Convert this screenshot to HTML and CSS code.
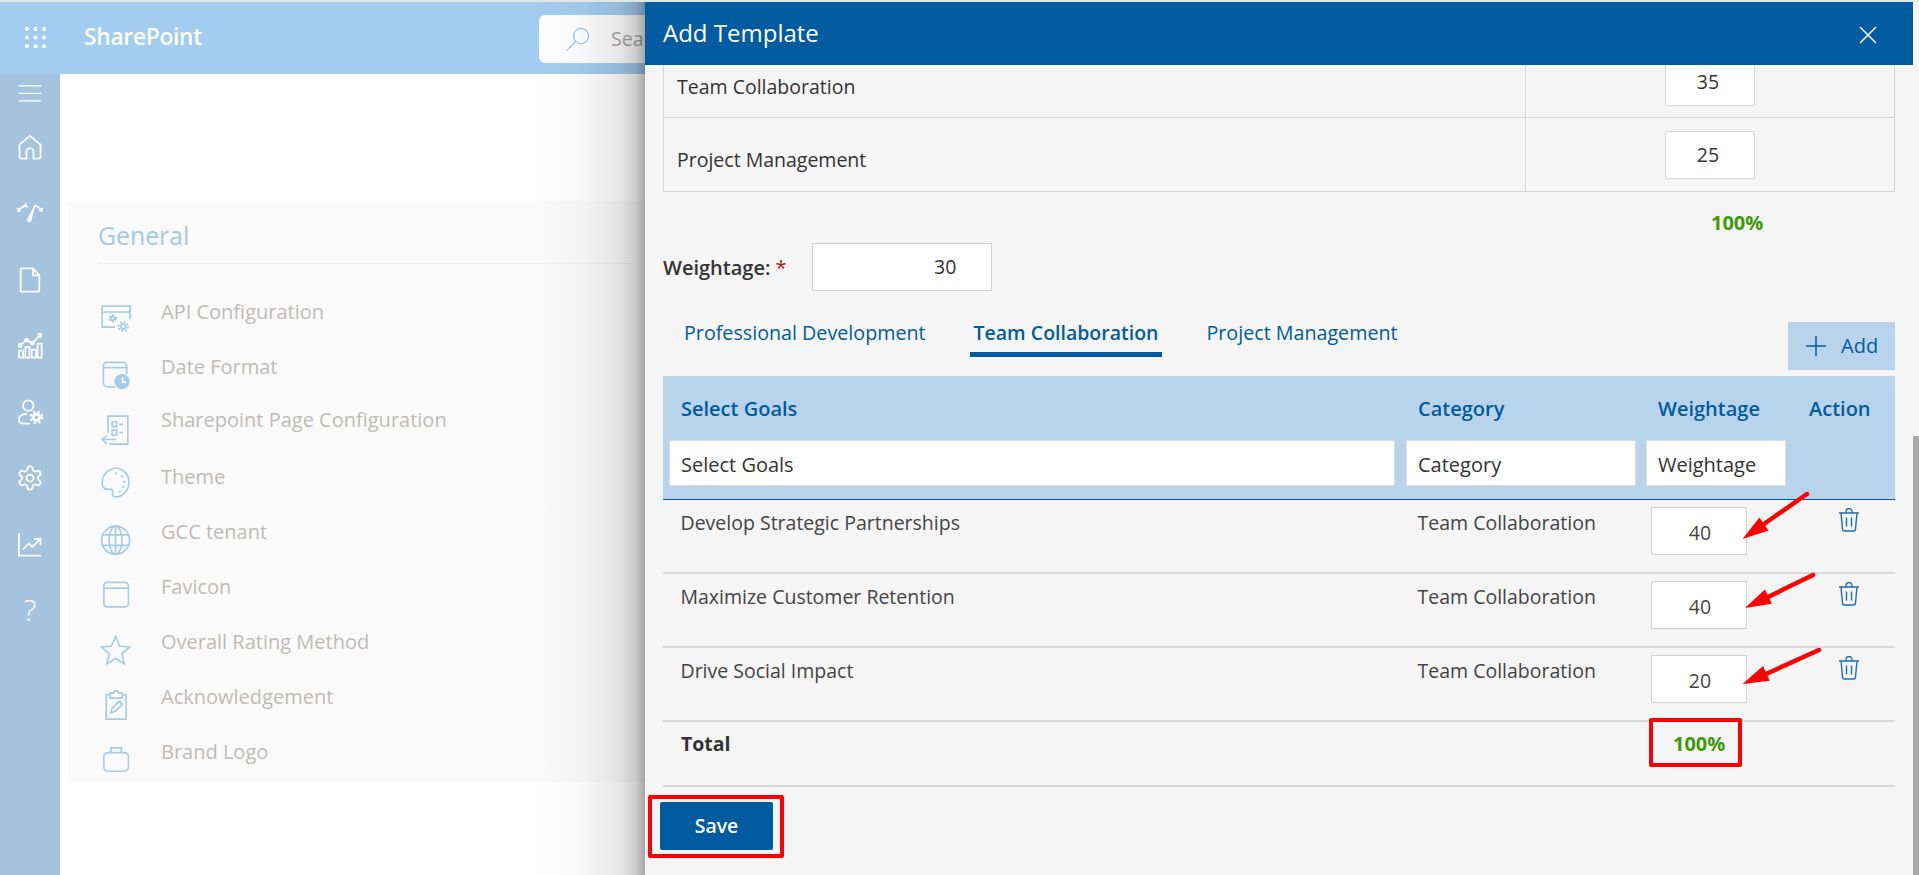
FILE: index.html
```html
<!doctype html>
<html lang="en-US">
<head>
  <meta name="viewport" content="width=device-width, initial-scale=1" charset="utf-8">
  <title>Add Template</title>
  <link rel="stylesheet" href="styles.css">
</head>
<body>
  <header class="topbar">
    <svg class="waffle" viewBox="0 0 24 24" fill="#fff">
      <circle cx="3" cy="3" r="2.1"/><circle cx="12" cy="3" r="2.1"/><circle cx="21" cy="3" r="2.1"/>
      <circle cx="3" cy="12" r="2.1"/><circle cx="12" cy="12" r="2.1"/><circle cx="21" cy="12" r="2.1"/>
      <circle cx="3" cy="21" r="2.1"/><circle cx="12" cy="21" r="2.1"/><circle cx="21" cy="21" r="2.1"/>
    </svg>
    <div class="brand">SharePoint</div>
    <div class="search">
      <svg class="search-icon" viewBox="0 0 24 24"><circle cx="15" cy="9" r="7.6"/><path d="M9.5 14.5 1 23.5"/></svg>
      <span>Sea</span>
    </div>
  </header>

  <div class="layout">
    <nav class="sidebar">
      <div class="nav-item nav-menu"><svg viewBox="0 0 24 24"><path d="M2.500 1.500h19M2.500 8h19M2.500 14.500h19"/></svg></div>
      <div class="nav-item nav-home"><svg viewBox="0 0 24 24"><path d="M12 2.500 3 10v10a2 2 0 0 0 2 2h4v-6a3 3 0 0 1 6 0v6h4a2 2 0 0 0 2-2V10z"/></svg></div>
      <div class="nav-item"><svg viewBox="0 3 24 24"><path d="M1.500 13c2-2.800 4.200-4.500 6.500-5.200M16.500 7.800c2.500.8 4.500 2.500 6 5.200M8 5.800l1.500 3.700M1 10l3 2.500M23 10l-3 2.500"/><path class="solid" d="M17 5.500 9.500 19.500a2 2 0 0 0 3.500 1.800z"/></svg></div>
      <div class="nav-item"><svg viewBox="0 0 24 24"><path d="M4.500 2h10l5.500 6v12.500a1.500 1.500 0 0 1-1.500 1.500h-13A1.500 1.500 0 0 1 4 20.500v-17A1.500 1.500 0 0 1 5.500 2zM14.500 2v6H20"/></svg></div>
      <div class="nav-item"><svg viewBox="0 0 24 24"><path d="M2.500 16h3.500v6H2.500zM8 13h3.500v9H8zM13.500 15H17v7h-3.500zM18.500 10H22v12h-3.500zM3.500 11.500l5.500-4.500 5 2.500 6-6"/><circle cx="3.500" cy="11.500" r="1.300"/><circle cx="9" cy="7" r="1.300"/><circle cx="14" cy="9.500" r="1.300"/><circle cx="20.500" cy="3" r="1.300"/></svg></div>
      <div class="nav-item"><svg viewBox="0 0 24 24"><circle cx="10.500" cy="6.500" r="4.500"/><path d="M9.500 13.500C5 13.500 2.500 15.500 2.500 18.500s2.500 3.500 5 3.500h4.500"/><circle class="solid" cx="17.500" cy="16.500" r="4"/><circle class="gear-teeth" cx="17.500" cy="16.500" r="5"/><circle class="gear-hole" cx="17.500" cy="16.500" r="1.500"/></svg></div>
      <div class="nav-item"><svg viewBox="0 0 24 24"><path d="M12.220 2h-.44a2 2 0 0 0-2 2v.18a2 2 0 0 1-1 1.730l-.43.25a2 2 0 0 1-2 0l-.15-.08a2 2 0 0 0-2.730.73l-.22.38a2 2 0 0 0 .73 2.730l.15.1a2 2 0 0 1 1 1.720v.51a2 2 0 0 1-1 1.740l-.15.09a2 2 0 0 0-.73 2.730l.22.38a2 2 0 0 0 2.730.73l.15-.08a2 2 0 0 1 2 0l.43.25a2 2 0 0 1 1 1.730V20a2 2 0 0 0 2 2h.44a2 2 0 0 0 2-2v-.18a2 2 0 0 1 1-1.730l.43-.25a2 2 0 0 1 2 0l.15.08a2 2 0 0 0 2.730-.73l.22-.39a2 2 0 0 0-.73-2.730l-.15-.08a2 2 0 0 1-1-1.740v-.5a2 2 0 0 1 1-1.740l.15-.09a2 2 0 0 0 .73-2.730l-.22-.38a2 2 0 0 0-2.730-.73l-.15.08a2 2 0 0 1-2 0l-.43-.25a2 2 0 0 1-1-1.730V4a2 2 0 0 0-2-2z"/><circle cx="12" cy="12" r="3"/></svg></div>
      <div class="nav-item"><svg viewBox="0 0 24 24"><path d="M2.500 2.500v19.500h19M6 16.500l5-5 3 3 7-7M15.500 7.500H21V13"/></svg></div>
      <div class="nav-item nav-help">?</div>
    </nav>

    <main class="content">
      <section class="card">
        <h2>General</h2>
        <ul class="settings">
          <li><svg viewBox="0 0 24 24"><path d="M12 19H1V1h24v11M1 6h24"/><circle cx="10" cy="11.500" r="1.500"/><circle class="teeth" cx="10" cy="11.500" r="2.800"/><circle cx="19" cy="18.500" r="2.200"/><circle class="teeth" cx="19" cy="18.500" r="4"/></svg>API Configuration</li>
          <li><svg viewBox="0 0 24 24"><path d="M12 23H6a4 4 0 0 1-4-4V5a3 3 0 0 1 3-3h14a3 3 0 0 1 3 3v7M2 6.500h20"/><circle class="fill" cx="18" cy="18.500" r="6.500"/><path class="hands" d="M18.500 15v4h3"/></svg>Date Format</li>
          <li class="settings-page"><svg viewBox="0 0 24 24"><path d="M6 15V1h17v24H7M9.500 6h4v4h-4zM9.500 13h4v4h-4zM15.500 8H19M15.500 15H19M13 21H1.500M5 17.500l-4 3.500 4 3.500"/></svg><span>Sharepoint Page Configuration</span></li>
          <li><svg viewBox="0 2.500 24 24"><path d="M13 25.500c-2.500 0-3.500-1.500-3-3.500.5-2.500-1-3.500-3-3-3 .5-5.500-1-6-4C.5 7 6 1 13 1c6 0 11 5.500 11 12s-5 12.500-11 12.500z"/><circle class="fill" cx="13" cy="5.500" r="1"/><circle class="fill" cx="18" cy="8" r="1"/><circle class="fill" cx="20" cy="12.500" r="1"/><circle class="fill" cx="19" cy="17" r="1"/><circle class="fill" cx="16" cy="21" r="1"/></svg>Theme</li>
          <li><svg viewBox="0 0 24 24"><circle cx="12.500" cy="13" r="12"/><ellipse cx="12.500" cy="13" rx="5.500" ry="12"/><path d="M12.500 1v24M1.500 8.500h22M1.500 17.500h22"/></svg>GCC tenant</li>
          <li><svg viewBox="0 0 24 24"><rect x="2.500" y="2" width="21" height="21" rx="3"/><path d="M2.500 7h21"/></svg>Favicon</li>
          <li><svg viewBox="0 0 24 24"><path d="M12.500 1.500l3.500 8 8.500.8-6.500 5.700 2 8.700-7.500-4.600-7.500 4.600 2-8.700L.5 10.300l8.500-.8z"/></svg>Overall Rating Method</li>
          <li><svg viewBox="0 0 24 24"><path d="M8 4H4.500v21h17V4H18M8 2.500h3a2 2 0 0 1 4 0h3V7H8zM8.500 19.500l1-4 6-6 2.800 2.800-6 6z"/></svg>Acknowledgement</li>
          <li><svg viewBox="0 0 24 24"><rect x="2.500" y="6.500" width="21" height="16" rx="3.500"/><path d="M8.500 6.500V2.500h9v4"/></svg>Brand Logo</li>
        </ul>
      </section>
    </main>
  </div>

  <aside class="panel">
    <div class="panel-head">
      <h1>Add Template</h1>
      <svg class="close" viewBox="0 0 18 18"><path d="M1 1l16 16M17 1 1 17"/></svg>
    </div>
    <div class="panel-body">
      <div class="category-table">
        <div class="category-row">
          <div class="category-name">Team Collaboration</div>
          <div class="category-value"><div class="value-box">35</div></div>
        </div>
        <div class="category-row">
          <div class="category-name">Project Management</div>
          <div class="category-value"><div class="value-box">25</div></div>
        </div>
      </div>
      <div class="category-total">100%</div>

      <div class="weight-row">
        <label>Weightage: <span class="req">*</span></label>
        <div class="weight-box">30</div>
      </div>

      <div class="tabs-row">
        <div class="tabs">
          <a>Professional Development</a>
          <a class="active">Team Collaboration</a>
          <a>Project Management</a>
        </div>
        <button class="add-btn"><svg viewBox="0 0 20 20"><path d="M10 0v20M0 10h20"/></svg>Add</button>
      </div>

      <div class="goals">
        <div class="goals-head">
          <div class="cell-goal"><strong>Select Goals</strong><div class="filter">Select Goals</div></div>
          <div class="cell-cat"><strong>Category</strong><div class="filter">Category</div></div>
          <div class="cell-weight"><strong>Weightage</strong><div class="filter">Weightage</div></div>
          <div class="cell-action"><strong>Action</strong></div>
        </div>

        <div class="goal-row">
          <div class="goal-name">Develop Strategic Partnerships</div>
          <div class="goal-cat">Team Collaboration</div>
          <div class="goal-weight"><div class="goal-box">40</div></div>
          <div class="goal-action"><svg viewBox="0 0 22 24"><path d="M1 5h20M8 5V3.500a2.500 2.500 0 0 1 6 0V5M3 5l1.500 16a2 2 0 0 0 2 2h9a2 2 0 0 0 2-2L19 5M8.500 9.500v9M13.500 9.500v9"/></svg></div>
        </div>
        <div class="goal-row">
          <div class="goal-name">Maximize Customer Retention</div>
          <div class="goal-cat">Team Collaboration</div>
          <div class="goal-weight"><div class="goal-box">40</div></div>
          <div class="goal-action"><svg viewBox="0 0 22 24"><path d="M1 5h20M8 5V3.500a2.500 2.500 0 0 1 6 0V5M3 5l1.500 16a2 2 0 0 0 2 2h9a2 2 0 0 0 2-2L19 5M8.500 9.500v9M13.500 9.500v9"/></svg></div>
        </div>
        <div class="goal-row">
          <div class="goal-name">Drive Social Impact</div>
          <div class="goal-cat">Team Collaboration</div>
          <div class="goal-weight"><div class="goal-box">20</div></div>
          <div class="goal-action"><svg viewBox="0 0 22 24"><path d="M1 5h20M8 5V3.500a2.500 2.500 0 0 1 6 0V5M3 5l1.500 16a2 2 0 0 0 2 2h9a2 2 0 0 0 2-2L19 5M8.500 9.500v9M13.500 9.500v9"/></svg></div>
        </div>
        <div class="goal-row total-row">
          <div class="goal-name">Total</div>
          <div></div>
          <div class="goal-total">100%</div>
          <div></div>
        </div>
      </div>

      <button class="save-btn">Save</button>
    </div>
    <div class="scroll-thumb"></div>
  </aside>

  <!-- red markup drawn on top of the screenshot -->
  <div class="mark mark-total"></div>
  <div class="mark mark-save"></div>
  <svg class="arrows" viewBox="0 0 1919 875">
    <line x1="1807" y1="494" x2="1764" y2="524"/>
    <polygon points="1742.500,539 1759.400,517.400 1768.600,530.600"/>
    <line x1="1813" y1="575" x2="1768" y2="597"/>
    <polygon points="1745,608 1764.900,589.400 1771.900,603.800"/>
    <line x1="1819" y1="650" x2="1766" y2="674"/>
    <polygon points="1742.500,684 1763.100,666.100 1769.700,680.700"/>
  </svg>
</body>
</html>
```

FILE: styles.css
```css
* {
  box-sizing: border-box;
}

html,
body {
  height: 100%;
}

body {
  margin: 0;
  overflow: hidden;
  background: #fff;
  color: #333;
  font-family: "Open Sans", "Noto Sans", Arial, sans-serif;
  font-size: 19.500px;
  line-height: 24px;
  border-top: 2px solid #dfe8e4;
}

/* top bar */
.topbar {
  height: 72px;
  background: #a3cdf0;
  display: flex;
  align-items: center;
  padding-left: 24px;
}

.waffle {
  width: 23px;
  height: 23px;
  margin-top: -2px;
}

.brand {
  margin-left: 37px;
  width: 118px;
  color: #fff;
  font-size: 22.800px;
  font-weight: 600;
  margin-top: -3px;
  letter-spacing: -0.3px;
  white-space: nowrap;
}

.search {
  margin-left: 337px;
  width: 106px;
  height: 48px;
  margin-top: 2px;
  background: #fff;
  border-radius: 6px 0 0 6px;
  display: flex;
  align-items: center;
  padding-left: 27px;
  color: #a9a9a9;
  flex: none;
}

.search-icon {
  width: 24px;
  height: 24px;
  flex: none;
  margin-right: 21px;
  fill: none;
  stroke: #a3cbe9;
  stroke-width: 1.400;
}

/* left side */
.layout {
  display: flex;
  height: calc(100% - 72px);
}

.sidebar {
  width: 60px;
  flex: none;
  background: #a5c3de;
  padding-top: 1px;
}

.nav-item {
  height: 66px;
  display: flex;
  align-items: center;
  justify-content: center;
}

.nav-menu {
  height: 40px;
  align-items: flex-start;
  padding-top: 9px;
}

.nav-home {
  padding-bottom: 2px;
}

.nav-item svg {
  width: 28px;
  height: 28px;
  fill: none;
  stroke: #fff;
  stroke-width: 1.500;
  overflow: visible;
}

.nav-menu svg {
  stroke-width: 1.100;
}

.nav-item .solid {
  fill: #fff;
  stroke: none;
}

.nav-item .gear-teeth {
  stroke-width: 1.800;
  stroke-dasharray: 2 2;
}

.nav-item .gear-hole {
  fill: #a5c3de;
  stroke: none;
}

.nav-help {
  color: #fff;
  font-size: 30px;
  font-weight: 300;
}

.content {
  flex: 1;
  padding: 127px 0 0 8px;
}

.card {
  height: 581px;
  background: #fafafa;
  padding: 17px 0 0 30px;
}

.card h2 {
  margin: 0;
  width: 532px;
  height: 46px;
  border-bottom: 1px solid #efefef;
  color: #a5c8e4;
  font-size: 24.800px;
  font-weight: 400;
  line-height: 34px;
}

.settings {
  list-style: none;
  margin: 36px 0 0;
  padding: 0;
  color: #bfbab8;
  font-size: 20px;
}

.settings li {
  height: 55px;
  display: flex;
  align-items: flex-start;
}

.settings li svg {
  width: 28px;
  height: 28px;
  flex: none;
  margin: 5px 32px 0 3px;
  fill: none;
  stroke: #a5cbe7;
  stroke-width: 1.400;
  overflow: visible;
}

.settings .settings-page span {
  margin-top: -2px;
}

.settings .teeth {
  stroke-width: 1.500;
  stroke-dasharray: 1.700 1.400;
}

.settings .fill {
  fill: #a5cbe7;
  stroke: none;
}

.settings .hands {
  stroke: #fafafa;
}

/* slide-out panel */
.panel {
  position: absolute;
  top: 2px;
  left: 645px;
  right: 0;
  bottom: 0;
  background: #f5f5f5;
  display: flex;
  flex-direction: column;
}

.panel::before {
  content: "";
  position: absolute;
  top: 0;
  bottom: 0;
  right: 100%;
  width: 110px;
  background: linear-gradient(to right, rgba(0, 0, 0, 0), rgba(0, 0, 0, 0.03) 45%, rgba(0, 0, 0, 0.09) 75%, rgba(0, 0, 0, 0.2) 92%, rgba(0, 0, 0, 0.34));
}

.panel-head {
  height: 63px;
  margin-right: 6px;
  flex: none;
  background: #015ba0;
  color: #fff;
  display: flex;
  align-items: center;
  justify-content: space-between;
  padding: 0 36px 0 18px;
  position: relative;
  z-index: 1;
}

.panel-head h1 {
  margin: -2px 0 0;
  font-size: 24px;
  font-weight: 400;
}

.close {
  width: 18px;
  height: 18px;
  fill: none;
  stroke: #fff;
  stroke-width: 1.500;
  margin-top: 3px;
}

.panel-body {
  flex: 1;
  overflow: hidden;
  padding: 0 24px 0 18px;
}

.category-table {
  margin-top: -20px;
  border: 1px solid #d5d5d5;
  border-top: 0;
}

.category-row {
  display: grid;
  grid-template-columns: 862px 1fr;
  height: 73px;
  border-bottom: 1px solid #d5d5d5;
}

.category-row:last-child {
  border-bottom: 0;
}

.category-name {
  padding: 30px 0 0 13px;
  border-right: 1px solid #d5d5d5;
}

.category-value {
  padding: 13px 0 0 139px;
}

.value-box {
  width: 90px;
  height: 48px;
  background: #fff;
  border: 1px solid #d8d8d8;
  border-radius: 2px;
  text-align: center;
  padding-right: 4px;
  line-height: 46px;
}

.category-total {
  margin-top: 19px;
  margin-bottom: -1px;
  padding-left: 1048px;
  color: #3f9a0b;
  font-size: 20px;
  font-weight: 700;
}

.weight-row {
  margin-top: 9px;
  height: 48px;
  display: flex;
  align-items: center;
}

.weight-row label {
  width: 149px;
  font-size: 20px;
  font-weight: 600;
  padding-top: 2px;
}

.req {
  color: #a4262c;
  font-weight: 400;
}

.weight-box {
  width: 180px;
  height: 48px;
  background: #fff;
  border: 1px solid #d2d2d2;
  padding-left: 121px;
  line-height: 46px;
}

.tabs-row {
  margin-top: 30px;
  display: flex;
  justify-content: space-between;
  align-items: flex-start;
}

.tabs {
  display: flex;
  gap: 40px;
  margin-left: 17px;
  font-size: 19.700px;
}

.tabs a {
  padding: 0 4px 7px;
  color: #015ba0;
  border-bottom: 5px solid transparent;
}

.tabs a.active {
  font-size: 19.500px;
  font-weight: 600;
  border-bottom-color: #015ba0;
}

.add-btn {
  margin-top: 1px;
  width: 107px;
  height: 48px;
  border: 0;
  background: #b8d4ec;
  color: #015ba0;
  font: inherit;
  font-size: 20px;
  display: flex;
  align-items: center;
  padding: 0 0 0 18px;
}

.add-btn svg {
  width: 20px;
  height: 20px;
  margin-right: 15px;
  fill: none;
  stroke: #015ba0;
  stroke-width: 1.500;
}

.goals {
  margin-top: 6px;
}

.goals-head,
.goal-row {
  display: grid;
  grid-template-columns: 737px 240px 152px 1fr;
}

.goals-head {
  height: 124px;
  background: #b8d4ec;
  border-bottom: 1px solid #015ba0;
  padding-top: 21px;
}

.goals-head strong {
  display: block;
  color: #015ba0;
  font-size: 20px;
  font-weight: 600;
  margin-bottom: 19px;
  padding-left: 18px;
}

.filter {
  height: 46px;
  background: #fff;
  border: 1px solid #ded9d6;
  font-size: 20px;
  line-height: 48px;
  padding-left: 11px;
  margin-left: 6px;
}

.cell-goal .filter {
  width: 726px;
}

.cell-cat .filter {
  width: 230px;
}

.cell-weight .filter {
  width: 140px;
}

.cell-action strong {
  padding-left: 17px;
}

.goal-row {
  height: 74px;
  border-bottom: 2px solid #dbd7d9;
  color: #444;
}

.goal-name,
.goal-cat {
  padding: 11px 0 0 17.500px;
}

.goal-weight {
  padding: 7px 0 0 11px;
}

.goal-box {
  width: 96px;
  height: 48px;
  background: #fff;
  border: 1px solid #d2d2d2;
  text-align: center;
  padding-left: 2px;
  line-height: 50px;
}

.goal-action {
  padding: 8px 0 0 46px;
}

.goal-action svg {
  width: 22px;
  height: 24px;
  fill: none;
  stroke: #1c6fb3;
  stroke-width: 1.400;
}

.total-row {
  height: 65px;
}

.total-row .goal-name {
  padding-top: 10px;
  padding-left: 18px;
  color: #333;
  font-weight: 700;
}

.goal-total {
  padding: 10px 0 0 33px;
  color: #3f9a0b;
  font-size: 20px;
  font-weight: 700;
}

.save-btn {
  display: block;
  margin: 15px 0 0 -3px;
  width: 113px;
  height: 48px;
  border: 0;
  border-radius: 2px;
  background: #015ba0;
  color: #fff;
  font: inherit;
  font-weight: 600;
}

.scroll-thumb {
  position: absolute;
  right: 0;
  top: 434px;
  bottom: 0;
  width: 6px;
  background: #a9a9a9;
}

/* annotations */
.mark {
  position: absolute;
  border: 4px solid #fe0000;
  border-radius: 2px;
}

.mark-total {
  left: 1649px;
  top: 718px;
  width: 93px;
  height: 49px;
}

.mark-save {
  left: 648px;
  top: 795px;
  width: 136px;
  height: 63px;
}

.arrows {
  position: absolute;
  left: 0;
  top: 0;
  width: 1919px;
  height: 875px;
  fill: #fe0000;
  stroke: #fe0000;
  stroke-width: 4.500;
  stroke-linecap: round;
  pointer-events: none;
}

.arrows polygon {
  stroke: none;
}
```
